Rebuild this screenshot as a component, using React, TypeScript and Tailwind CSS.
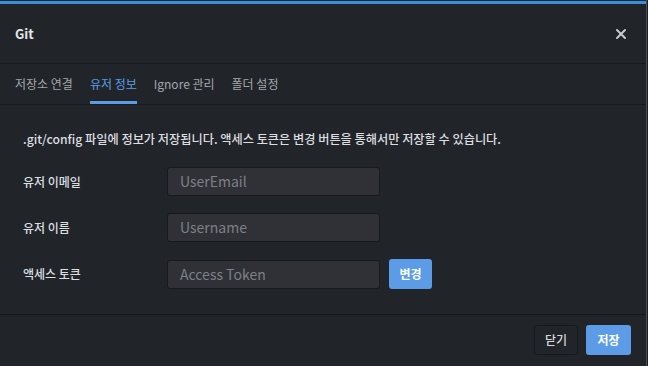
import { X } from "lucide-react"

const TABS = ["저장소 연결", "유저 정보", "Ignore 관리", "폴더 설정"]

const FIELDS = [
  { label: "유저 이메일", placeholder: "UserEmail" },
  { label: "유저 이름", placeholder: "Username" },
  { label: "액세스 토큰", placeholder: "Access Token", action: "변경" },
]

export default function App() {
  return (
    <div
      className="h-[366px] w-[648px] bg-[#1c1f22] text-[#d6d8da]"
      style={{ fontFamily: '"Noto Sans CJK KR", "Noto Sans", sans-serif' }}
    >
      <div className="flex h-full w-[647px] flex-col border-r border-[#4b5056] bg-[#212529] pt-px">
        <div className="h-[3px] bg-[#3a8fd9]" />

        {/* header */}
        <div className="flex h-[60px] items-center justify-between border-b border-[#17191c] pl-[15px] pr-[17px]">
          <span className="text-[13px] font-bold text-[#e4e6e8]">Git</span>
          <X className="h-[16px] w-[16px] text-[#c9cbcd]" strokeWidth={3} />
        </div>

        {/* tabs */}
        <div className="flex h-[41px] items-stretch gap-[17px] border-b border-[#17191c] px-[15px] text-[12px]">
          {TABS.map((t, i) => (
            <div
              key={t}
              className={
                i === 1
                  ? "flex items-center border-b-[3px] border-[#5c9ce6] pt-[3px] text-[#5c9ce6]"
                  : "flex items-center border-b-[3px] border-transparent pt-[3px] text-[#a3a7ab]"
              }
            >
              {t}
            </div>
          ))}
        </div>

        {/* body */}
        <div className="flex flex-1 flex-col border-b border-[#17191c] pl-[23px] pt-[25px]">
          <p className="text-[12.2px] font-medium text-[#dcdee0]">
            .git/config 파일에 정보가 저장됩니다. 액세스 토큰은 변경 버튼을 통해서만 저장할 수 있습니다.
          </p>
          <div className="mt-[19px] flex flex-col gap-[17px]">
            {FIELDS.map((f) => (
              <div key={f.label} className="flex items-center">
                <span className="w-[144px] text-[12px] font-medium text-[#dcdee0]">{f.label}</span>
                <div className="flex h-[29px] w-[213px] items-center rounded-[3px] border border-[#17191c] bg-[#2f3137] px-[12px] text-[14px] text-[#7d8086]">
                  {f.placeholder}
                </div>
                {f.action ? (
                  <button className="ml-[9px] h-[30px] w-[43px] rounded-[3px] bg-[#5c9ce6] text-[12px] font-bold text-white">
                    {f.action}
                  </button>
                ) : null}
              </div>
            ))}
          </div>
        </div>

        {/* footer */}
        <div className="flex h-[51px] items-center justify-end gap-[8px] pr-[15px] pb-[2px]">
          <button className="h-[30px] w-[44px] rounded-[3px] border border-[#17191c] text-[12px] font-medium text-[#d6d8da]">
            닫기
          </button>
          <button className="h-[30px] w-[45px] rounded-[3px] bg-[#5c9ce6] text-[12px] font-bold text-white">
            저장
          </button>
        </div>
      </div>
    </div>
  )
}
